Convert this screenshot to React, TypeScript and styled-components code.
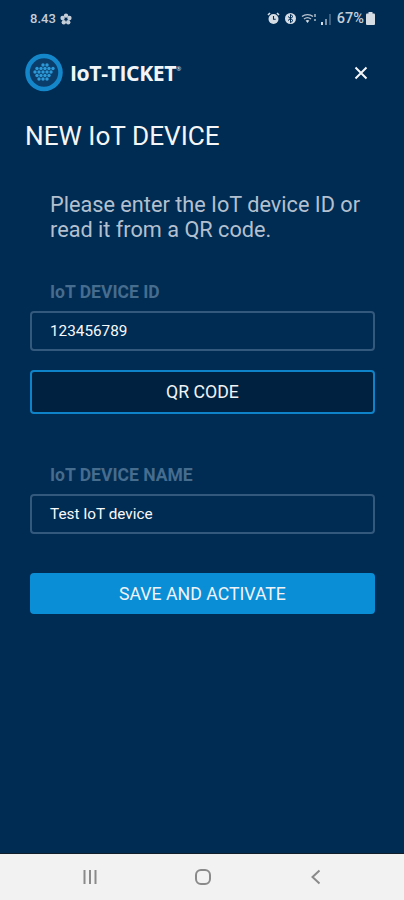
import React from 'react';
import styled, { createGlobalStyle } from 'styled-components';

const GlobalStyle = createGlobalStyle`
  html, body {
    margin: 0;
    padding: 0;
    background: #002b52;
    font-family: Roboto, "Liberation Sans", sans-serif;
  }
  * { box-sizing: border-box; }
`;

const Screen = styled.div`
  width: 404px;
  height: 900px;
  display: flex;
  flex-direction: column;
  overflow: hidden;
  background: #002b52;
`;

const StatusBar = styled.div`
  height: 36px;
  flex: none;
  padding: 1px 29px 0 30px;
  display: flex;
  align-items: center;
  justify-content: space-between;
  color: #c4ced9;
  font-size: 13px;
  font-weight: 500;
`;

const StatusGroup = styled.div`
  display: flex;
  align-items: center;
  gap: 4px;
`;

const Percent = styled.span`
  margin-left: 1px;
  margin-right: -2px;
  font-size: 14.5px;
`;

const Header = styled.header`
  height: 73px;
  flex: none;
  padding: 0 36px 0 25px;
  display: flex;
  align-items: center;
  justify-content: space-between;
`;

const Brand = styled.div`
  display: flex;
  align-items: center;
  gap: 7px;
`;

const BrandName = styled.span`
  font-family: "Open Sans", Roboto, sans-serif;
  font-size: 21.2px;
  font-weight: 700;
  color: #f2f5f8;
  letter-spacing: -0.4px;
  sup {
    font-size: 6px;
    font-weight: 400;
    vertical-align: 10px;
    line-height: 0;
  }
`;

const CloseButton = styled.button`
  width: 14px;
  height: 14px;
  padding: 0;
  border: 0;
  background: none;
  display: flex;
`;

const Title = styled.h1`
  margin: 10px 0 0 25px;
  font-size: 26.2px;
  line-height: 34px;
  font-weight: 400;
  color: #f4f6f8;
`;

const Intro = styled.p`
  margin: 39px 30px 0 50px;
  font-size: 21.7px;
  line-height: 25px;
  color: #b3c0cf;
`;

const Form = styled.form`
  padding: 0 29px 0 30px;
  display: flex;
  flex-direction: column;
`;

const Label = styled.label<{ $top: number }>`
  margin: ${p => p.$top}px 0 0 20px;
  height: 20px;
  font-size: 17.5px;
  line-height: 20px;
  font-weight: 700;
  color: #466c8e;
`;

const Field = styled.div`
  margin-top: 9px;
  height: 40px;
  padding: 0 18px;
  display: flex;
  align-items: center;
  border: 2px solid #33597c;
  border-radius: 4px;
  font-size: 15.3px;
  font-weight: 400;
  color: #f8f9fa;
`;

const Button = styled.button<{ $primary?: boolean }>`
  width: 100%;
  height: ${p => (p.$primary ? 41 : 44)}px;
  margin-top: ${p => (p.$primary ? 39 : 19)}px;
  border: ${p => (p.$primary ? '0' : '2px solid #0f83c9')};
  border-radius: 4px;
  background: ${p => (p.$primary ? '#0a8ed6' : '#00213f')};
  color: #f0f3f6;
  font-family: inherit;
  font-size: 17.7px;
  font-weight: 400;
`;

const Spacer = styled.div`
  flex: 1;
`;

const NavBar = styled.nav`
  height: 47px;
  flex: none;
  display: grid;
  grid-template-columns: 179px 48px 1fr;
  align-items: center;
  background: #f2f2f2;
  border-top: 1px solid #101e2c;
`;

const NavCell = styled.div`
  display: flex;
  justify-content: center;
`;

const BackCell = styled(NavCell)`
  justify-content: flex-start;
  padding-left: 83px;
`;

const Logo = () => (
  <svg width="38" height="39" viewBox="0 0 38 39">
    <circle cx="19" cy="19.5" r="16.5" fill="#0b3d6b" stroke="#1487cb" strokeWidth="4.5" />
    {[
      [18, 12], [22, 12],
      [12, 15.5], [16, 15.5], [20, 15.5], [24, 15.5], [28, 15.5],
      [10, 19], [14, 19], [18, 19], [22, 19], [26, 19],
      [12, 22.5], [16, 22.5], [20, 22.5], [24, 22.5],
      [14, 26], [18, 26], [22, 26],
    ].map(([x, y]) => (
      <circle key={`${x}-${y}`} cx={x} cy={y} r="1.7" fill="#2c9ad9" />
    ))}
  </svg>
);

const Alarm = () => (
  <svg width="13" height="13" viewBox="0 0 13 13">
    <circle cx="6.5" cy="7" r="5" fill="#d5dce3" />
    <path d="M1 3l2-2M12 3l-2-2" stroke="#d5dce3" strokeWidth="1.6" />
    <path d="M6.5 4v3.2h2.2" stroke="#002b52" strokeWidth="1.1" fill="none" />
  </svg>
);

const Bluetooth = () => (
  <svg width="13" height="13" viewBox="0 0 13 13">
    <circle cx="6.5" cy="6.5" r="5.5" fill="#d5dce3" />
    <path d="M4 4.5l5 4-2.5 2.2V2.3L9 4.5l-5 4" stroke="#002b52" strokeWidth="1" fill="none" />
  </svg>
);

const Wifi = () => (
  <svg width="16" height="12" viewBox="0 0 16 12">
    <path d="M1 3.5C4 1 9 1 12 3.5M3 6c2-1.600 5-1.600 7 0" stroke="#b8c4d0" strokeWidth="1.4" fill="none" />
    <path d="M6.500 10L4.600 7.600c1.200-.8 2.600-.8 3.800 0z" fill="#d5dce3" />
    <path d="M14 1v3M14 6v2" stroke="#d5dce3" strokeWidth="1.2" />
  </svg>
);

const Signal = () => (
  <svg width="11" height="12" viewBox="0 0 11 12">
    <rect x="0" y="9" width="2" height="3" fill="#d5dce3" />
    <rect x="4" y="6" width="2" height="6" fill="#7f93a8" />
    <rect x="8" y="1" width="2" height="11" fill="#3d5f7f" />
  </svg>
);

const Battery = () => (
  <svg width="9" height="13" viewBox="0 0 9 13">
    <rect x="2.500" y="0" width="4" height="2" fill="#d5dce3" />
    <rect x="0" y="1.500" width="9" height="11.500" rx="1" fill="#d5dce3" />
  </svg>
);

const Flower = () => (
  <svg width="12" height="12" viewBox="0 0 12 12">
    <g fill="#c4ced9">
      <circle cx="6" cy="2.600" r="2.200" />
      <circle cx="2.600" cy="5" r="2.200" />
      <circle cx="9.400" cy="5" r="2.200" />
      <circle cx="3.800" cy="9.200" r="2.200" />
      <circle cx="8.200" cy="9.200" r="2.200" />
    </g>
  </svg>
);

export default function App() {
  return (
    <Screen>
      <GlobalStyle />
      <StatusBar>
        <StatusGroup>
          8.43 <Flower />
        </StatusGroup>
        <StatusGroup>
          <Alarm />
          <Bluetooth />
          <Wifi />
          <Signal />
          <Percent>67%</Percent>
          <Battery />
        </StatusGroup>
      </StatusBar>
      <Header>
        <Brand>
          <Logo />
          <BrandName>
            IoT-TICKET<sup>®</sup>
          </BrandName>
        </Brand>
        <CloseButton aria-label="Close">
          <svg width="14" height="14" viewBox="0 0 14 14">
            <path d="M1.500 1.500l11 11M12.500 1.500l-11 11" stroke="#f4f6f8" strokeWidth="2" />
          </svg>
        </CloseButton>
      </Header>
      <Title>NEW IoT DEVICE</Title>
      <Intro>Please enter the IoT device ID or read it from a QR code.</Intro>
      <Form>
        <Label $top={40}>IoT DEVICE ID</Label>
        <Field>123456789</Field>
        <Button type="button">QR CODE</Button>
        <Label $top={51}>IoT DEVICE NAME</Label>
        <Field>Test IoT device</Field>
        <Button type="button" $primary>
          SAVE AND ACTIVATE
        </Button>
      </Form>
      <Spacer />
      <NavBar>
        <NavCell>
          <svg width="16" height="16" viewBox="0 0 16 16">
            <path d="M2.500 1v14M8 1v14M13.500 1v14" stroke="#8a8a8a" strokeWidth="2" />
          </svg>
        </NavCell>
        <NavCell>
          <svg width="16" height="16" viewBox="0 0 16 16">
            <rect x="1" y="1" width="14" height="14" rx="5" fill="none" stroke="#8a8a8a" strokeWidth="2" />
          </svg>
        </NavCell>
        <BackCell>
          <svg width="12" height="16" viewBox="0 0 12 16">
            <path d="M9.500 1.500L2.500 8l7 6.500" fill="none" stroke="#8a8a8a" strokeWidth="2" />
          </svg>
        </BackCell>
      </NavBar>
    </Screen>
  );
}
